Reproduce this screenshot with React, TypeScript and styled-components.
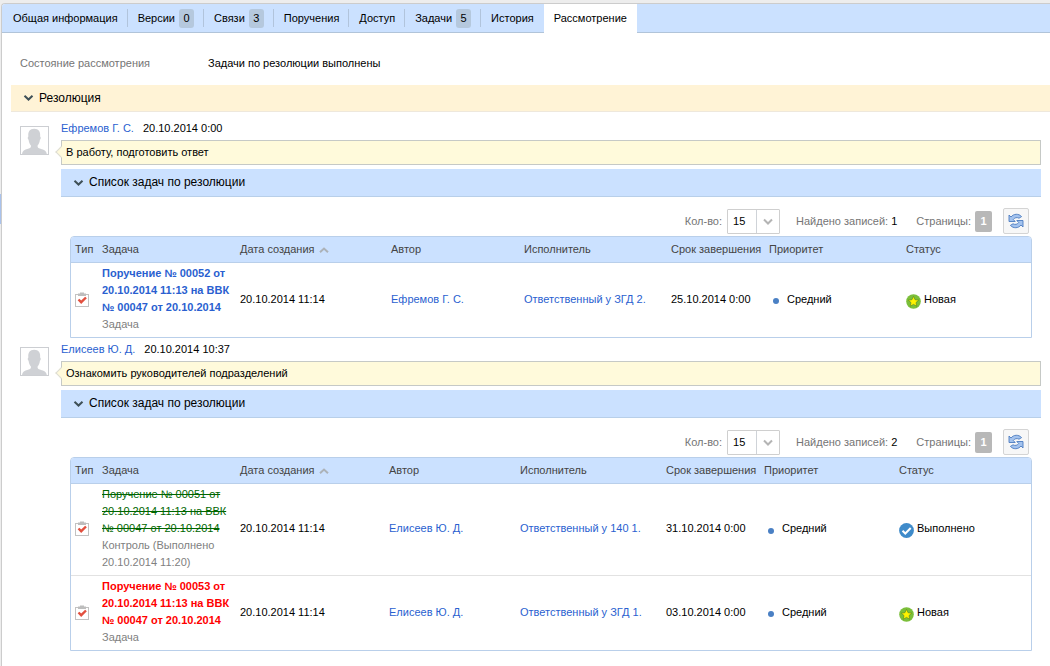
import React, { useState } from "react";
import styled, { createGlobalStyle, css } from "styled-components";

const GlobalStyle = createGlobalStyle`
  *, *::before, *::after { box-sizing: border-box; }
  body {
    margin: 0;
    background: #ededed;
    color: #000;
    font: 11px/17px "Liberation Sans", Arial, sans-serif;
  }
  button, select { font: inherit; color: inherit; }
  button { cursor: pointer; }
`;

const Page = styled.div`
  display: flex;
  min-height: 100vh;
  padding-top: 3px;
`;

const SideHandle = styled.div`
  width: 1px;
  height: 30px;
  margin-top: 191px;
  background: #a9c2ec;
`;

const Panel = styled.main`
  flex: 1;
  min-width: 0;
  background: #fff;
  border: solid #ccc;
  border-width: 1px 0 0 1px;
  border-top-left-radius: 4px;
`;

const TabBar = styled.nav`
  display: flex;
  height: 29px;
  padding-left: 1px;
  background: #cbe1ff;
  border-bottom: 1px solid #b1c4d9;
  border-top-left-radius: 3px;
`;

const Tab = styled.button<{ $active?: boolean }>`
  position: relative;
  display: flex;
  align-items: center;
  gap: 4px;
  height: 29px;
  padding: 0 10px;
  border: 0;
  white-space: nowrap;
  background: ${(p) => (p.$active ? "#fff" : "transparent")};

  ${(p) =>
    !p.$active &&
    css`
      &:not(:nth-last-child(2))::after {
        content: "";
        position: absolute;
        right: 0;
        top: 5px;
        height: 18px;
        border-right: 1px solid #b1c4dc;
      }
    `}
`;

const TabCount = styled.span`
  padding: 1px 4px;
  min-width: 15px;
  border-radius: 3px;
  background: #b5c8dd;
`;

const StatusList = styled.dl`
  display: flex;
  margin: 0;
  padding: 22px 18px 13px;
`;

const StatusName = styled.dt`
  width: 188px;
  color: #757575;
`;

const StatusValue = styled.dd`
  margin: 0;
`;

const SectionHeader = styled.button<{ $tone: "cream" | "blue" }>`
  display: flex;
  align-items: center;
  gap: 5px;
  width: 100%;
  height: ${(p) => (p.$tone === "cream" ? 27 : 28)}px;
  padding: 0 12px;
  border: 0;
  border-bottom: 1px solid ${(p) => (p.$tone === "cream" ? "#eee8dc" : "#b8cfe9")};
  background: ${(p) => (p.$tone === "cream" ? "#fff3d6" : "#cbe1ff")};
  font-size: 12px;
  text-align: left;
`;

const Section = styled.section`
  margin-left: 9px;
`;

const EntryList = styled.div`
  padding-top: 5px;
`;

const Entry = styled.article`
  display: flex;
  gap: 12px;
  padding: 3px 9px 0;
`;

const Avatar = styled.svg`
  flex: none;
  width: 29px;
  height: 29px;
  margin-top: 6px;
`;

const EntryBody = styled.div`
  flex: 1;
  min-width: 0;
`;

const Byline = styled.div`
  display: flex;
  gap: 9px;
  height: 20px;
`;

const Link = styled.a`
  color: #2a5fd0;
  text-decoration: none;
`;

const Comment = styled.p`
  position: relative;
  margin: 0 0 4px;
  padding: 3px 4px;
  border: 1px solid #c6c9c6;
  background: #fffadb;

  &::before {
    content: "";
    position: absolute;
    left: -5px;
    top: 7px;
    width: 8px;
    height: 8px;
    transform: rotate(45deg);
    border: solid #dcdcd4;
    border-width: 0 0 1px 1px;
    background: #fffadb;
  }
`;

const TaskArea = styled.div`
  padding: 11px 9px 0;
`;

const Toolbar = styled.div`
  display: flex;
  align-items: center;
  justify-content: flex-end;
  height: 26px;
  margin-bottom: 2px;
  padding-right: 3px;
  color: #757575;
`;

const CountLabel = styled.label`
  margin-right: 5px;
`;

const SelectBox = styled.span`
  position: relative;
  display: flex;
  width: 53px;
  height: 25px;
  margin-right: 16px;

  svg {
    position: absolute;
    right: 0;
    top: 0;
    pointer-events: none;
  }
`;

const Select = styled.select`
  appearance: none;
  width: 100%;
  padding: 0 5px;
  border: 1px solid #cfcfcf;
  border-radius: 1px;
  background: #fff;
  color: #000;
`;

const Found = styled.span`
  margin-right: 19px;

  b {
    font-weight: normal;
    color: #000;
  }
`;

const PageNumber = styled.button`
  width: 17px;
  height: 21px;
  margin: 0 11px 0 4px;
  padding: 0;
  border: 0;
  border-radius: 2px;
  background: #b8b8b8;
  color: #fff;
  font-weight: bold;
`;

const RefreshButton = styled.button`
  display: flex;
  align-items: center;
  justify-content: center;
  width: 26px;
  height: 26px;
  padding: 0;
  border: 1px solid #d4d4d4;
  border-radius: 2px;
  background: #f7f7f7;
`;

const Table = styled.table`
  width: 100%;
  table-layout: fixed;
  border: 1px solid #b9cfea;
  border-radius: 4px 4px 0 0;
  border-spacing: 0;
  overflow: hidden;
`;

const HeadCell = styled.th`
  height: 26px;
  padding: 0 0 0 4px;
  border-bottom: 1px solid #b9cfea;
  background: #cbe1ff;
  color: #444;
  font-weight: normal;
  text-align: left;
  white-space: nowrap;

  svg {
    margin-left: 4px;
  }
`;

const Row = styled.tr`
  & + & > td {
    border-top: 1px solid #e2e2e2;
  }
`;

const Cell = styled.td`
  padding: 2px 5px 4px 4px;
  vertical-align: middle;

  > svg {
    display: block;
  }
`;

type TaskState = "open" | "done" | "overdue";

const TaskLink = styled.a<{ $state: TaskState }>`
  display: block;
  text-decoration: ${(p) => (p.$state === "done" ? "line-through" : "none")};
  font-weight: ${(p) => (p.$state === "done" ? "normal" : "bold")};
  color: ${(p) => ({ open: "#2a5fd0", done: "#006600", overdue: "#ff0000" })[p.$state]};
`;

const TaskNote = styled.div`
  color: #808080;
`;

const Priority = styled.span`
  display: flex;
  align-items: center;
  gap: 8px;
  padding-left: 4px;

  &::before {
    content: "";
    width: 6px;
    height: 6px;
    margin-top: 4px;
    border-radius: 50%;
    background: #4a80c4;
  }
`;

const Status = styled.span`
  display: flex;
  align-items: center;
  gap: 3px;
  height: 17px;

  svg {
    flex: none;
    margin-top: 4px;
  }
`;

const Chevron = () => (
  <svg width="11" height="8" viewBox="0 0 11 8" fill="none" stroke="#3f5057" strokeWidth="2">
    <path d="M1.500 1.700 5.500 5.500 9.500 1.700" />
  </svg>
);

const SelectArrow = () => (
  <svg width="24" height="25" viewBox="0 0 24 25" fill="none">
    <path d="M.5 1v23" stroke="#cfd3d8" />
    <path d="M8 10.500 12 14.500 16 10.500" stroke="#b4b4b4" strokeWidth="2" />
  </svg>
);

const SortArrow = () => (
  <svg width="10" height="6" viewBox="0 0 10 6" fill="none" stroke="#acb2b8" strokeWidth="2">
    <path d="M1 5.200 5 1.500 9 5.200" />
  </svg>
);

const Person = () => (
  <Avatar viewBox="0 0 29 29" role="img" aria-label="Фото">
    <rect x=".5" y=".5" width="28" height="28" fill="#fff" stroke="#ccced2" />
    <path
      d="M2 28c.3-3 2.500-4.200 6-5.200 2.400-.7 3-1.300 3-3C9.400 17.800 8.800 15.800 8.600 13.800c-1.200-1-1-2.800-.2-3.300C7.800 5.500 9.800 2.700 14.200 2.700S20.700 5.500 20.100 10.500c.8.500 1 2.300-.2 3.300-.2 2-.8 4-2.400 6 0 1.700.6 2.300 3 3 3.500 1 6 2.200 6.300 5.200z"
      fill="#cfd1d5"
    />
  </Avatar>
);

const Refresh = () => (
  <svg width="16" height="16" viewBox="0 0 16 16" strokeLinejoin="round">
    <g fill="#a4c3ee" stroke="#4c7cc0" strokeWidth=".9">
      <path d="M1 2v6.500h6.200L5.300 6.500C6.500 4.600 9 4 11 5.200L13.600 3.600C10.800.4 5.600.5 3 4z" />
      <path d="M15 14V7.500H8.800l1.900 2C9.500 11.400 7 12 5 10.800L2.400 12.400C5.200 15.600 10.400 15.500 13 12z" />
    </g>
  </svg>
);

const Clipboard = () => (
  <svg width="14" height="15" viewBox="0 0 14 15" fill="none">
    <rect x=".5" y="2.500" width="13" height="12" fill="#fff" stroke="#c2c2c2" />
    <path d="M3 1.500h2V.5h4v1h2V4H3z" fill="#bdbdbd" />
    <path d="M3.500 7.500 6.200 10.200 11 5.500" stroke="#e2503f" strokeWidth="2.400" />
  </svg>
);

const NewIcon = () => (
  <svg width="15" height="15" viewBox="0 0 15 15">
    <circle cx="7.500" cy="7.500" r="7.300" fill="#7bbf3a" />
    <path
      d="M7.500 2.300 9.100 5.700 12.800 6.100 10 8.600 10.800 12.300 7.500 10.400 4.200 12.300 5 8.600 2.200 6.100 5.900 5.700z"
      fill="#fff200"
      stroke="#5f8f22"
      strokeWidth=".7"
    />
  </svg>
);

const DoneIcon = () => (
  <svg width="15" height="15" viewBox="0 0 15 15" fill="none">
    <circle cx="7.500" cy="7.500" r="7.400" fill="#3f8bca" />
    <path d="M3.500 7.700 6.300 10.500 11.700 5" stroke="#fff" strokeWidth="2" />
  </svg>
);

interface Task {
  title: string;
  note: string;
  state: TaskState;
  created: string;
  author: string;
  executor: string;
  due: string;
  status: "Новая" | "Выполнено";
}

interface Resolution {
  id: string;
  author: string;
  date: string;
  text: string;
  columns: number[];
  tasks: Task[];
}

const tabs: { label: string; count?: number }[] = [
  { label: "Общая информация" },
  { label: "Версии", count: 0 },
  { label: "Связи", count: 3 },
  { label: "Поручения" },
  { label: "Доступ" },
  { label: "Задачи", count: 5 },
  { label: "История" },
  { label: "Рассмотрение" },
];

const headings = ["Тип", "Задача", "Дата создания", "Автор", "Исполнитель", "Срок завершения", "Приоритет", "Статус"];

const resolutions: Resolution[] = [
  {
    id: "r1",
    author: "Ефремов Г. С.",
    date: "20.10.2014 0:00",
    text: "В работу, подготовить ответ",
    columns: [27, 138, 151, 133, 147, 98, 137, 129],
    tasks: [
      {
        title: "Поручение № 00052 от 20.10.2014 11:13 на ВВК № 00047 от 20.10.2014",
        note: "Задача",
        state: "open",
        created: "20.10.2014 11:14",
        author: "Ефремов Г. С.",
        executor: "Ответственный у ЗГД 2.",
        due: "25.10.2014 0:00",
        status: "Новая",
      },
    ],
  },
  {
    id: "r2",
    author: "Елисеев Ю. Д.",
    date: "20.10.2014 10:37",
    text: "Ознакомить руководителей подразделений",
    columns: [27, 138, 149, 131, 146, 98, 135, 136],
    tasks: [
      {
        title: "Поручение № 00051 от 20.10.2014 11:13 на ВВК № 00047 от 20.10.2014",
        note: "Контроль (Выполнено 20.10.2014 11:20)",
        state: "done",
        created: "20.10.2014 11:14",
        author: "Елисеев Ю. Д.",
        executor: "Ответственный у 140 1.",
        due: "31.10.2014 0:00",
        status: "Выполнено",
      },
      {
        title: "Поручение № 00053 от 20.10.2014 11:13 на ВВК № 00047 от 20.10.2014",
        note: "Задача",
        state: "overdue",
        created: "20.10.2014 11:14",
        author: "Елисеев Ю. Д.",
        executor: "Ответственный у ЗГД 1.",
        due: "03.10.2014 0:00",
        status: "Новая",
      },
    ],
  },
];

function TaskTable({ columns, tasks }: { columns: number[]; tasks: Task[] }) {
  return (
    <Table>
      <colgroup>
        {columns.map((width, i) => (
          <col key={i} width={width} />
        ))}
      </colgroup>
      <thead>
        <tr>
          {headings.map((h) => (
            <HeadCell key={h} scope="col">
              {h}
              {h === "Дата создания" && <SortArrow />}
            </HeadCell>
          ))}
        </tr>
      </thead>
      <tbody>
        {tasks.map((t) => (
          <Row key={t.title}>
            <Cell><Clipboard /></Cell>
            <Cell>
              <TaskLink href="#task" $state={t.state}>{t.title}</TaskLink>
              <TaskNote>{t.note}</TaskNote>
            </Cell>
            <Cell>{t.created}</Cell>
            <Cell><Link href="#author">{t.author}</Link></Cell>
            <Cell><Link href="#executor">{t.executor}</Link></Cell>
            <Cell>{t.due}</Cell>
            <Cell><Priority>Средний</Priority></Cell>
            <Cell>
              <Status>
                {t.status === "Новая" ? <NewIcon /> : <DoneIcon />}
                {t.status}
              </Status>
            </Cell>
          </Row>
        ))}
      </tbody>
    </Table>
  );
}

function ResolutionEntry({ item }: { item: Resolution }) {
  const [open, setOpen] = useState(true);
  return (
    <Entry>
      <Person />
      <EntryBody>
        <Byline>
          <Link href="#person">{item.author}</Link>
          <time>{item.date}</time>
        </Byline>
        <Comment>{item.text}</Comment>
        <SectionHeader $tone="blue" aria-expanded={open} onClick={() => setOpen(!open)}>
          <Chevron />
          Список задач по резолюции
        </SectionHeader>
        {open && (
          <TaskArea>
            <Toolbar>
              <CountLabel htmlFor={`${item.id}-count`}>Кол-во:</CountLabel>
              <SelectBox>
                <Select id={`${item.id}-count`} defaultValue="15">
                  <option>15</option>
                  <option>30</option>
                  <option>50</option>
                </Select>
                <SelectArrow />
              </SelectBox>
              <Found>Найдено записей: <b>{item.tasks.length}</b></Found>
              <span>Страницы:</span>
              <PageNumber>1</PageNumber>
              <RefreshButton aria-label="Обновить"><Refresh /></RefreshButton>
            </Toolbar>
            <TaskTable columns={item.columns} tasks={item.tasks} />
          </TaskArea>
        )}
      </EntryBody>
    </Entry>
  );
}

export default function App() {
  const [active, setActive] = useState("Рассмотрение");
  const [open, setOpen] = useState(true);
  return (
    <>
      <GlobalStyle />
      <Page>
        <SideHandle />
        <Panel>
          <TabBar>
            {tabs.map((t) => (
              <Tab key={t.label} $active={t.label === active} onClick={() => setActive(t.label)}>
                {t.label}
                {t.count !== undefined && <TabCount>{t.count}</TabCount>}
              </Tab>
            ))}
          </TabBar>
          <StatusList>
            <StatusName>Состояние рассмотрения</StatusName>
            <StatusValue>Задачи по резолюции выполнены</StatusValue>
          </StatusList>
          <Section>
            <SectionHeader $tone="cream" aria-expanded={open} onClick={() => setOpen(!open)}>
              <Chevron />
              Резолюция
            </SectionHeader>
            {open && (
              <EntryList>
                {resolutions.map((r) => (
                  <ResolutionEntry key={r.id} item={r} />
                ))}
              </EntryList>
            )}
          </Section>
        </Panel>
      </Page>
    </>
  );
}
